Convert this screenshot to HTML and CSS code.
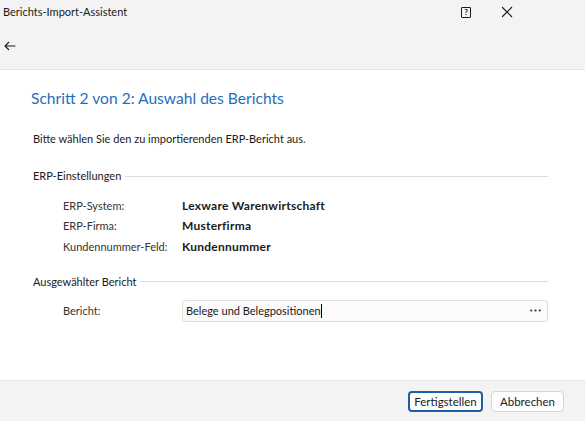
FILE: index.html
```html
<!DOCTYPE html>
<html lang="de">
  <head>
    <meta charset="UTF-8" />
    <title>Berichts-Import-Assistent</title>
    <link rel="stylesheet" href="styles.css">
  </head>
  <body>
    <div class="window">
      <!-- Title bar -->
      <div class="titlebar">
        <span class="title">Berichts-Import-Assistent</span>
        <span class="help-btn">?</span>
        <svg class="close-btn" width="12" height="12" viewBox="0 0 12 12">
          <path d="M1 1 L11 11 M11 1 L1 11" stroke="#1a1a1a" stroke-width="1.1" fill="none" />
        </svg>
      </div>
      <div class="navbar">
        <svg class="back-btn" width="12" height="10" viewBox="0 0 12 10">
          <path d="M11.5 5 H1 M5 1 L1 5 L5 9" stroke="#1a1a1a" stroke-width="1.1" fill="none" />
        </svg>
      </div>

      <!-- Wizard page -->
      <div class="page">
        <h1 class="page-title">Schritt 2 von 2: Auswahl des Berichts</h1>
        <p class="page-desc">Bitte wählen Sie den zu importierenden ERP-Bericht aus.</p>

        <div class="group-header">
          <span>ERP-Einstellungen</span>
        </div>
        <div class="field-grid">
          <span class="label">ERP-System:</span>
          <span class="value">Lexware Warenwirtschaft</span>
          <span class="label">ERP-Firma:</span>
          <span class="value">Musterfirma</span>
          <span class="label">Kundennummer-Feld:</span>
          <span class="value">Kundennummer</span>
        </div>

        <div class="group-header second">
          <span>Ausgewählter Bericht</span>
        </div>
        <div class="field-grid">
          <span class="label">Bericht:</span>
          <div class="picker">
            <span class="picker-text">Belege und Belegpositionen<span class="caret"></span></span>
            <svg class="picker-more" width="11" height="3" viewBox="0 0 11 3">
              <circle cx="1.2" cy="1.5" r="1.1" fill="#333" />
              <circle cx="5.5" cy="1.5" r="1.1" fill="#333" />
              <circle cx="9.8" cy="1.5" r="1.1" fill="#333" />
            </svg>
          </div>
        </div>
      </div>

      <!-- Buttons -->
      <div class="footer">
        <button class="btn default">Fertigstellen</button>
        <button class="btn">Abbrechen</button>
      </div>
    </div>
  </body>
</html>
```

FILE: styles.css
```css
body {
  margin: 0;
  padding: 0;
  font-family: Lato, "Noto Sans", sans-serif;
  font-size: 11px;
  color: #1a1a1a;
  background: #fff;
}
.window {
  width: 585px;
  height: 421px;
  display: flex;
  flex-direction: column;
  overflow: hidden;
}
.titlebar {
  height: 30px;
  display: flex;
  align-items: center;
  background: #f3f3f3;
  padding-left: 3px;
}
.title {
  margin-right: auto;
  margin-top: -8px;
}
.help-btn {
  width: 8px;
  height: 9px;
  border: 1px solid #1a1a1a;
  border-radius: 1px;
  font-size: 8px;
  font-weight: bold;
  line-height: 9px;
  text-align: center;
  margin-top: -6px;
  margin-right: 30px;
}
.close-btn {
  margin-right: 72px;
  margin-top: -6px;
}
.navbar {
  height: 39px;
  display: flex;
  align-items: center;
  background: #f3f3f3;
  border-bottom: 1px solid #e3e3e3;
  padding-left: 4px;
}
.back-btn {
  margin-top: -8px;
}
.page {
  flex: 1;
  padding: 18px 37px 0 31px;
}
.page-title {
  margin: 0;
  font-size: 15.6px;
  font-weight: normal;
  line-height: 21px;
  color: #1f6fb8;
}
.page-desc {
  margin: 22px 0 0 2px;
  line-height: 16px;
}
.group-header {
  display: flex;
  align-items: center;
  margin: 21px 0 0 2px;
  line-height: 16px;
}
.group-header::after {
  content: "";
  flex: 1;
  height: 1px;
  background: #dcdcdc;
  margin-left: 4px;
}
.group-header.second {
  margin-top: 17px;
}
.field-grid {
  display: grid;
  grid-template-columns: 119px 1fr;
  grid-auto-rows: 20.5px;
  align-items: center;
  margin: 11px 0 0 32px;
  color: #333;
  white-space: nowrap;
}
.value {
  font-size: 12px;
  letter-spacing: 0.25px;
  font-weight: bold;
  color: #1a1a1a;
}
.picker {
  height: 20px;
  display: flex;
  align-items: center;
  border: 1px solid #e0e0e0;
  border-radius: 3px;
  background: #fbfbfb;
  padding: 0 6px 0 3px;
  color: #1a1a1a;
}
.picker-text {
  margin-right: auto;
}
.caret {
  display: inline-block;
  width: 1px;
  height: 14px;
  background: #000;
  vertical-align: -3px;
}
.footer {
  height: 40px;
  display: flex;
  justify-content: flex-end;
  align-items: center;
  gap: 8px;
  background: #f3f3f3;
  border-top: 1px solid #e3e3e3;
  padding-right: 21px;
}
.btn {
  font-family: inherit;
  font-size: 11.5px;
  color: #1a1a1a;
  background: #fdfdfd;
  border: 1px solid #d5d5d5;
  border-radius: 4px;
  height: 21px;
  padding: 0;
}
.btn.default {
  border: 2px solid #1d5fa3;
  width: 75px;
}
.btn:not(.default) {
  width: 73px;
}
```
